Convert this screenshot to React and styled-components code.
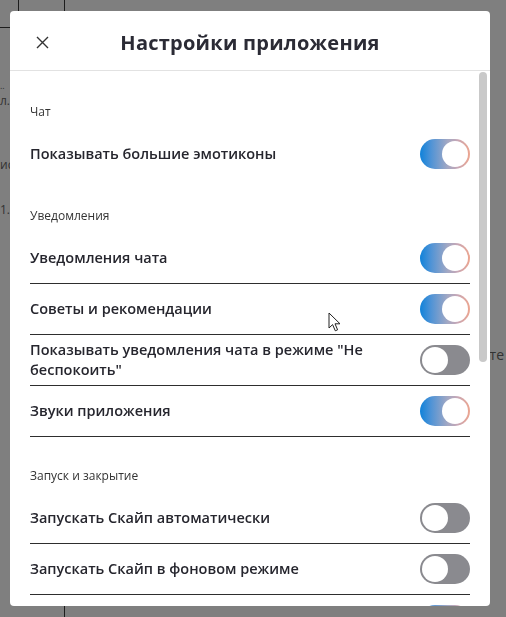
import React from "react";
import styled, { createGlobalStyle } from "styled-components";

const GlobalStyle = createGlobalStyle`
  html, body { margin: 0; padding: 0; height: 100%; overflow: hidden; }
  body { font-family: "Open Sans", "Noto Sans", sans-serif; background: #fff; }
  * { box-sizing: border-box; }
`;

/* ---------- background page (under the dimming overlay) ---------- */
const Page = styled.div`
  display: flex;
  height: 100vh;
  background: #fff;
`;

const Sidebar = styled.aside`
  width: 65px;
  flex: none;
  border-right: 1px solid #3a3a3a;
  display: flex;
  flex-direction: column;
`;

const SideTop = styled.div`
  height: 28px;
  border-bottom: 1px solid #3a3a3a;
  display: flex;
`;

const SideTopCell = styled.div`
  width: 19px;
  border-right: 1px solid #3a3a3a;
`;

const SideLine = styled.div`
  font-size: ${(p) => (p.$small ? 9 : 12)}px;
  line-height: ${(p) => (p.$small ? 9 : 14)}px;
  color: #666;
  margin-top: ${(p) => p.$gap}px;
  white-space: nowrap;
`;

const Main = styled.main`
  flex: 1;
  display: flex;
  flex-direction: column;
  padding-top: 346px;
`;

const MainNote = styled.div`
  font-size: 14px;
  line-height: 18px;
  color: #666;
  text-align: right;
  padding-right: 2px;
  white-space: nowrap;
  overflow: hidden;
`;

/* ---------- overlay + dialog ---------- */
const Overlay = styled.div`
  position: fixed;
  inset: 0;
  background: rgba(0, 0, 0, 0.5);
  display: flex;
  align-items: flex-start;
  padding: 11px 16px 0 10px;
`;

const Dialog = styled.section`
  width: 480px;
  height: 595px;
  background: #fff;
  border-radius: 4px;
  display: flex;
  flex-direction: column;
  overflow: hidden;
`;

const Header = styled.header`
  flex: none;
  height: 60px;
  border-bottom: 1px solid #e2e2e2;
  display: grid;
  grid-template-columns: 1fr auto 1fr;
  align-items: center;
  padding-top: 4px;
`;

const CloseButton = styled.button`
  justify-self: start;
  margin-left: 25px;
  width: 14px;
  height: 14px;
  padding: 0;
  border: none;
  background: none;
  display: flex;
  align-items: center;
  justify-content: center;
  cursor: pointer;
`;

const Title = styled.h1`
  margin: 0;
  font-size: 20px;
  font-weight: 700;
  color: #2b2b35;
  letter-spacing: 0.25px;
`;

const Body = styled.div`
  flex: 1;
  min-height: 0;
  display: flex;
`;

const ScrollArea = styled.div`
  flex: 1;
  overflow-y: auto;
  scrollbar-width: none;
  padding: 1px 8px 50px 20px;
  &::-webkit-scrollbar { display: none; }
`;

const ScrollRail = styled.div`
  flex: none;
  width: 12px;
  padding: 1px 3px 0 1px;
`;

const ScrollThumb = styled.div`
  height: 290px;
  background: #c9c9c9;
  border-radius: 4px;
`;

const Section = styled.div`
  padding-top: ${(p) => p.$pad ?? 30}px;
`;

const SectionTitle = styled.h2`
  margin: 0 0 9px;
  height: 16px;
  font-size: 12px;
  line-height: 16px;
  font-weight: 400;
  color: #333;
`;

const Row = styled.div`
  display: flex;
  align-items: center;
  justify-content: space-between;
  gap: 20px;
  min-height: ${(p) => (p.$divided ? 51 : 50)}px;
  border-bottom: ${(p) => (p.$divided ? "1px solid #2e2e2e" : "none")};
`;

const RowLabel = styled.span`
  flex: 1;
  font-size: 14.5px;
  line-height: 20px;
  font-weight: 600;
  color: #26262e;
`;

const Track = styled.button`
  flex: none;
  position: relative;
  width: 50px;
  height: 30px;
  padding: 0;
  border: none;
  border-radius: 15px;
  cursor: pointer;
  background: ${(p) =>
    p.$on
      ? "linear-gradient(90deg, #0f82da 0%, #4f93d6 22%, #a2a8c4 55%, #c6a7b6 75%, #eda58f 100%)"
      : "#8a8a8f"};
`;

const Knob = styled.span`
  position: absolute;
  top: 2px;
  left: ${(p) => (p.$on ? 22 : 2)}px;
  width: 26px;
  height: 26px;
  border-radius: 50%;
  background: #fff;
`;

const Pointer = styled.svg`
  position: fixed;
  left: 328px;
  top: 312px;
  pointer-events: none;
`;

function Toggle({ on }) {
  return (
    <Track role="switch" aria-checked={on} $on={on}>
      <Knob $on={on} />
    </Track>
  );
}

function SettingRow({ label, on, divided = true }) {
  return (
    <Row $divided={divided}>
      <RowLabel>{label}</RowLabel>
      <Toggle on={on} />
    </Row>
  );
}

const sections = [
  {
    title: "Чат",
    pad: 32,
    divided: false,
    rows: [{ label: "Показывать большие эмотиконы", on: true }],
  },
  {
    title: "Уведомления",
    pad: 29,
    rows: [
      { label: "Уведомления чата", on: true },
      { label: "Советы и рекомендации", on: true },
      { label: 'Показывать уведомления чата в режиме "Не беспокоить"', on: false },
      { label: "Звуки приложения", on: true },
    ],
  },
  {
    title: "Запуск и закрытие",
    pad: 31,
    rows: [
      { label: "Запускать Скайп автоматически", on: false },
      { label: "Запускать Скайп в фоновом режиме", on: false },
      { label: "При закрытии не завершать работу Скайпа", on: true },
    ],
  },
  {
    title: "Другое",
    rows: [
      { label: "Показывать предварительный просмотр ссылок", on: true },
      { label: "Отправлять отчёты о сбоях", on: true },
      { label: "Проверка орфографии", on: true },
      { label: "Использовать аппаратное ускорение", on: false },
      { label: "Показывать статус в сети", on: true },
    ],
  },
];

export default function App() {
  return (
    <>
      <GlobalStyle />
      <Page>
        <Sidebar>
          <SideTop>
            <SideTopCell />
          </SideTop>
          <SideLine $small $gap={53}>..</SideLine>
          <SideLine $gap={4}>л.</SideLine>
          <SideLine $gap={50}>ис</SideLine>
          <SideLine $gap={31}>1.0</SideLine>
        </Sidebar>
        <Main>
          <MainNote>Ответить в чате</MainNote>
        </Main>
      </Page>
      <Overlay>
        <Dialog role="dialog" aria-label="Настройки приложения">
          <Header>
            <CloseButton aria-label="Закрыть">
              <svg width="13" height="13" viewBox="0 0 13 13">
                <path d="M1 1 L12 12 M12 1 L1 12" stroke="#333" strokeWidth="1.4" fill="none" />
              </svg>
            </CloseButton>
            <Title>Настройки приложения</Title>
          </Header>
          <Body>
            <ScrollArea>
              {sections.map((s) => (
                <Section key={s.title} $pad={s.pad}>
                  <SectionTitle>{s.title}</SectionTitle>
                  {s.rows.map((r) => (
                    <SettingRow
                      key={r.label}
                      label={r.label}
                      on={r.on}
                      divided={s.divided !== false}
                    />
                  ))}
                </Section>
              ))}
            </ScrollArea>
            <ScrollRail aria-hidden="true">
              <ScrollThumb />
            </ScrollRail>
          </Body>
        </Dialog>
      </Overlay>
      <Pointer width="14" height="21" viewBox="0 0 14 21">
        <path
          d="M1 1 L1 16 L4.6 12.6 L7.3 18.8 L9.6 17.8 L7 11.8 L12 11.8 Z"
          fill="#fff"
          stroke="#222"
          strokeWidth="1"
          strokeLinejoin="miter"
        />
      </Pointer>
    </>
  );
}
